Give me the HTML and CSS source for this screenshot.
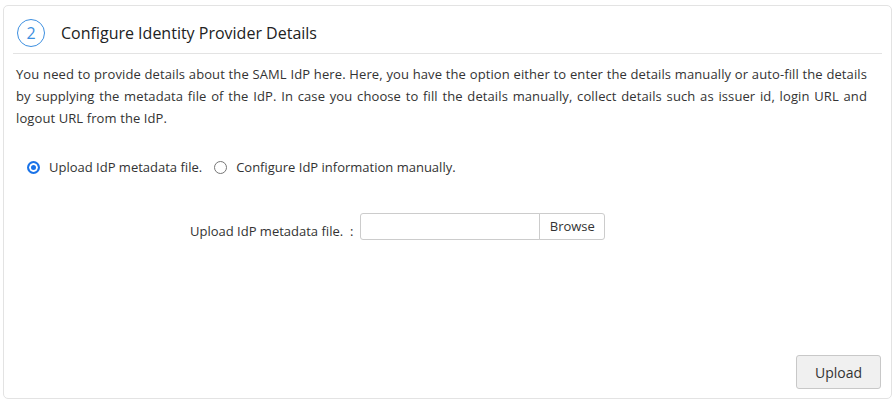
FILE: index.html
```html
<!DOCTYPE html>
<html>
<head>
<meta charset="utf-8">
<link rel="stylesheet" href="styles.css">
</head>
<body>
<div class="card">
  <div class="header">
    <span class="step">2</span>
    <span class="title">Configure Identity Provider Details</span>
  </div>
  <div class="content">
    <p class="desc">You need to provide details about the SAML IdP here. Here, you have the option either to enter the details manually or auto-fill the details by supplying the metadata file of the IdP. In case you choose to fill the details manually, collect details such as issuer id, login URL and logout URL from the IdP.</p>
    <div class="radios">
      <label class="radio"><span class="dot checked"></span>Upload IdP metadata file.</label>
      <label class="radio"><span class="dot"></span>Configure IdP information manually.</label>
    </div>
    <div class="upload-row">
      <span class="label">Upload IdP metadata file. &nbsp;:</span>
      <span class="file-input"></span>
      <span class="browse">Browse</span>
    </div>
    <div class="spacer"></div>
    <div class="actions">
      <span class="btn">Upload</span>
    </div>
  </div>
</div>
</body>
</html>
```
FILE: styles.css
```css
* { box-sizing: border-box; }
html, body { margin: 0; padding: 0; background: #fff; }
body {
  font-family: "Open Sans", "Liberation Sans", sans-serif;
  color: #333;
  width: 896px;
  height: 402px;
  overflow: hidden;
}
.card {
  margin: 5px 0 0 3px;
  width: 889px;
  height: 394px;
  border: 1px solid #e3e3e3;
  border-radius: 5px;
  display: flex;
  flex-direction: column;
}
.header {
  margin: 0 9px;
  height: 48px;
  border-bottom: 1px solid #e3e3e3;
  display: flex;
  align-items: center;
  padding-left: 4px;
  padding-top: 6px;
}
.step {
  width: 28px;
  height: 28px;
  border: 1px solid #3d8fe0;
  border-radius: 50%;
  color: #3d8fe0;
  font-size: 16px;
  display: flex;
  align-items: center;
  justify-content: center;
  line-height: 1;
}
.title {
  margin-left: 16px;
  font-size: 16px;
  color: #222;
}
.content {
  flex: 1;
  display: flex;
  flex-direction: column;
  padding: 9px 24px 9px 12px;
}
.desc {
  margin: 0;
  font-size: 13px;
  line-height: 22px;
  text-align: justify;
  letter-spacing: 0.1px;
}
.radios {
  margin-top: 29px;
  display: flex;
  align-items: center;
  font-size: 13px;
  padding-left: 11px;
}
.radio {
  display: flex;
  align-items: center;
  margin-right: 12px;
}
.dot {
  width: 13px;
  height: 13px;
  border: 1px solid #767676;
  border-radius: 50%;
  margin-right: 9px;
  display: inline-block;
}
.dot.checked {
  border: 2px solid #1a73e8;
  background: #1a73e8;
  box-shadow: inset 0 0 0 2px #fff;
}
.upload-row {
  margin-top: 36px;
  display: flex;
  align-items: center;
  font-size: 13px;
  padding-left: 174px;
}
.label {
  margin-top: 10px;
  margin-right: 7px;
}
.file-input {
  width: 180px;
  height: 27px;
  border: 1px solid #ccc;
  border-radius: 3px 0 0 3px;
}
.browse {
  height: 27px;
  width: 66px;
  border: 1px solid #ccc;
  border-radius: 0 3px 3px 0;
  display: flex;
  align-items: center;
  justify-content: center;
  margin-left: -1px;
}
.spacer { flex: 1; }
.actions {
  display: flex;
  justify-content: flex-end;
  margin-right: -14px;
}
.btn {
  width: 85px;
  height: 34px;
  background: #f0f0f0;
  border: 1px solid #c8c8c8;
  border-radius: 3px;
  font-size: 14px;
  display: flex;
  align-items: center;
  justify-content: center;
}
```
